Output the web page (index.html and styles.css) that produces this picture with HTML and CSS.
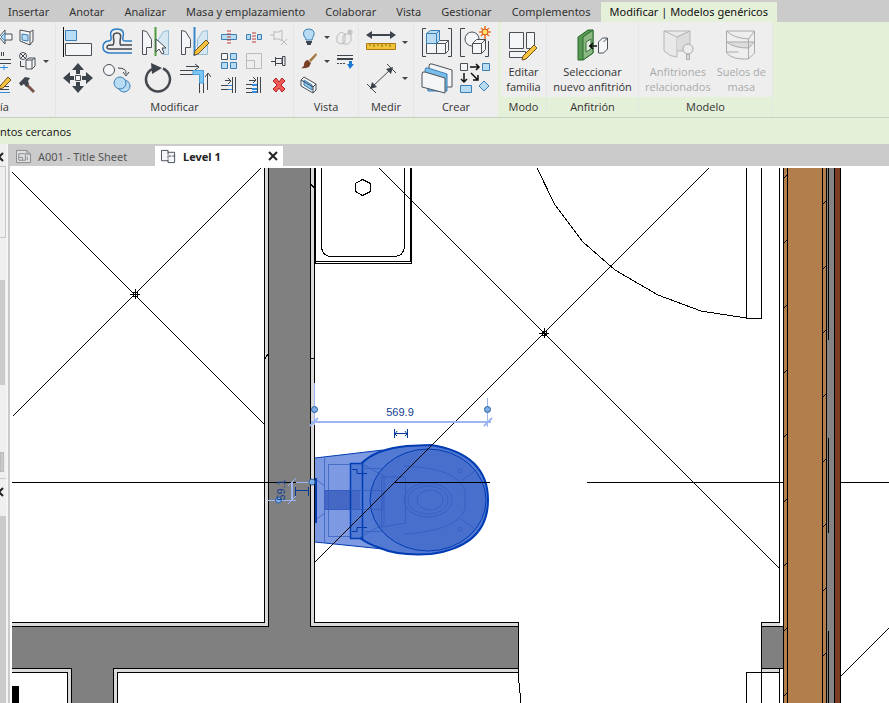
FILE: index.html
```html
<!DOCTYPE html>
<html lang="es">
<head>
<meta charset="utf-8">
<title>Level 1</title>
<link rel="stylesheet" href="styles.css">
</head>
<body>
<nav class="tabs">
  <a href="#">Insertar</a><a href="#">Anotar</a><a href="#">Analizar</a><a href="#">Masa y emplazamiento</a><a href="#">Colaborar</a><a href="#">Vista</a><a href="#">Gestionar</a><a href="#">Complementos</a><a href="#" class="active">Modificar | Modelos genéricos</a>
</nav>

<div class="ribbon">
  <section class="panel geometry">
    <div class="tools small-grid">
      <button aria-label="Muesca"><svg viewBox="0 0 18 18"><path d="M17 6h-7V2L4 9l6 7v-4h7z" class="o"/><path d="M6 9l4-4v8z" class="bl"/></svg></button>
      <button aria-label="Cortar"><svg viewBox="0 0 18 18"><path d="M2 2l10 2 3-2v11l-3 4L2 13zM12 4v13" class="o"/><path d="M4 6l6 1v6l-6-1z" class="bl"/></svg></button>
      <i></i>
      <button aria-label="Juntas"><svg viewBox="0 0 18 18"><path d="M0 7.500h16M0 11.500h16" class="k"/><path d="M6.500 0v4M8.500 0v4" class="k"/><path d="M5 15.500h8M9 13v5" class="b"/></svg></button>
      <button aria-label="Unir"><svg viewBox="0 0 18 18"><circle cx="5" cy="4" r="3.500" class="o"/><path d="M2 1l6 6M8 1L2 7M2.500 9v5.500h4" class="k"/><path d="M8 8l3-2h6v8l-3 3H8zM8 8h6v9M14 8l3-2" class="o"/></svg></button>
      <i class="arrow"></i>
      <button aria-label="Pintar"><svg viewBox="0 0 18 18"><path d="M0 10.500h14M0 13.500h14" class="k"/><path d="M0 16.500h15" class="b"/><path d="M5 10L13 1l3 3-8 8-4 1z" class="pen"/></svg></button>
      <button aria-label="Derribar"><svg viewBox="0 0 18 18"><path d="M8 8l8 8" stroke="#7a5346" stroke-width="3"/><path d="M1 7l6-6 5 1-2 3 1 3-3 3-2-3-3 2z" fill="#3f454d"/></svg></button>
      <i></i>
    </div>
    <h2>ía</h2>
  </section>

  <section class="panel modify">
    <div class="tools">
      <div class="big-grid four">
        <button aria-label="Alinear"><svg viewBox="0 0 32 32"><path d="M1.500 1v30" stroke="#111"/><path d="M3.500 4.500h11v10h-11z" class="bl"/><path d="M3.500 17.500h26v12h-26z" class="o"/></svg></button>
        <button aria-label="Desfase"><svg viewBox="0 0 32 32"><path d="M31 15h-7q-3 0-2-4 2-8-6-8-8 0-6 8 1 4-3 4-5 1-5 6t6 6h23" fill="none" stroke="#2f7fc8" stroke-width="1.500"/><path d="M31 19H19.500q-1-2 0-7 1-5-3.500-5t-3.500 5q1 5-.5 7-6-.500-6 2t3 2h22" fill="none" stroke="#444a52" stroke-width="1.500"/></svg></button>
        <button aria-label="Simetría eje"><svg viewBox="0 0 32 32"><path d="M2.500 4.500l4 1 5 8v8h-5v7h-4z" class="o"/><path d="M28.500 4.500l-5 1-5 8v8h4l1 7h5z" class="lt"/><path d="M15.500 1v29" stroke="#4e9d3e" stroke-width="2"/><path d="M16 13v13l3-3 3 5 2-1-2-5h4z" fill="#fff" stroke="#454950"/></svg></button>
        <button aria-label="Dibujar eje"><svg viewBox="0 0 32 32"><path d="M2.500 4.500l4 1 5 8v8h-5v7h-4z" class="o"/><path d="M28.500 4.500l-5 1-5 8v15h10z" class="lt"/><path d="M15.500 1v29" stroke="#3a88cb" stroke-width="2"/><path d="M16 25l11-11 3 3-11 11-4 1z" class="pen"/></svg></button>
        <button aria-label="Mover"><svg viewBox="0 0 32 32"><path d="M16 1l6 7h-4v4h-4V8h-4zM16 31l6-7h-4v-4h-4v4h-4zM1 16l7-6v4h4v4H8v4zM31 16l-7-6v4h-4v4h4v4z" fill="#3c434b"/><path d="M13.500 13.500h5v5h-5z" class="o"/></svg></button>
        <button aria-label="Copiar"><svg viewBox="0 0 32 32"><circle cx="8" cy="8" r="5.500" class="o"/><path d="M17 6q9 0 8 6M22 10l3 4 3-4" class="k"/><circle cx="23" cy="24" r="6" class="bl"/><circle cx="19" cy="21" r="6" class="bl"/></svg></button>
        <button aria-label="Rotar"><svg viewBox="0 0 32 32"><path d="M12 7a12 12 0 1 0 11-.500" fill="none" stroke="#45494f" stroke-width="2.500"/><path d="M11 1l11 5-10 6z" fill="#3c434b"/></svg></button>
        <button aria-label="Recortar"><svg viewBox="0 0 32 32"><path d="M1 8.500h13M1 12.500h13M20.500 21v10M24.500 21v10M7 4.500h12M16 2l4 3-4 3M28.500 28V12M26 15l3-4 3 4" class="k"/><path d="M14 8.500h10.500V21h-4v-8.500H14z" fill="#7cc4f2" stroke="#4a9edb"/></svg></button>
      </div>
      <div class="small-grid">
        <button aria-label="Dividir"><svg viewBox="0 0 18 18"><path d="M1.500 6.500h15v5h-15z" class="bl"/><path d="M8 2v14M10 2v14" class="r"/></svg></button>
        <button aria-label="Dividir con hueco"><svg viewBox="0 0 18 18"><path d="M1.500 6.500h4v5h-4zM12.500 6.500h4v5h-4z" class="bl"/><path d="M8 4v11M10 4v11" class="r"/></svg></button>
        <button aria-label="Desbloquear" disabled><svg viewBox="0 0 18 18"><path d="M0 7h4M4 3v9M4 4h5l3-2v11l-3-2H4M11 11l6 6M17 11l-6 6" class="g"/></svg></button>
        <button aria-label="Matriz"><svg viewBox="0 0 18 18"><path d="M1.500 1.500h6v6h-6z" class="o"/><path d="M10.500 1.500h6v6h-6zM1.500 10.500h6v6h-6zM10.500 10.500h6v6h-6z" class="bl"/></svg></button>
        <button aria-label="Escala" disabled><svg viewBox="0 0 18 18"><path d="M1.500 1.500h15v15h-15z" class="g"/><path d="M1.500 8.500h8v8h-8z" class="g"/></svg></button>
        <button aria-label="Bloquear"><svg viewBox="0 0 18 18"><path d="M1 9.500h5M5.500 5v9M6 6.500h6v5H6M15 4.500h-2.500v9H15z" class="k"/></svg></button>
        <button aria-label="Recortar uno"><svg viewBox="0 0 18 18"><path d="M5 4.500h6M8 2l3 3-3 3M12.500 1v16M15.500 1v16M1 9.500h7M1 13.500h7" class="k"/><path d="M8 9.500h4M8 13.500h4" class="b"/></svg></button>
        <button aria-label="Recortar varios"><svg viewBox="0 0 18 18"><path d="M4 4.500h7M8 1l3 3-3 3M12.500 1v16M15.500 1v16M1 8.500h7M1 12.500h7M1 16.500h7" class="k"/><path d="M7 9h5M7 13h5M7 16h5" class="b w2"/></svg></button>
        <button aria-label="Suprimir"><svg viewBox="0 0 18 18"><path d="M3 5l3-3 3 4 3-4 3 3-4 4 4 4-3 3-3-4-3 4-3-3 4-4z" fill="#ef5b54" stroke="#b51f25"/></svg></button>
      </div>
    </div>
    <h2>Modificar</h2>
  </section>

  <section class="panel view">
    <div class="tools small-grid">
      <button aria-label="Ocultar"><svg viewBox="0 0 18 18"><path d="M6 12q0-2-2-4-2-6 4-7 7 0 6 6-2 3-2 5z" class="bl"/><path d="M6 14h6M7 16h4" class="k w2"/></svg></button>
      <i class="arrow"></i>
      <button aria-label="Desplazar" disabled><svg viewBox="0 0 18 18"><path d="M1 8l4-4 4 2v8l-4 2-4-2zM7 8l3-2h5v7l-3 3H7zM14 1v6M11 4h6M12 2l4 4M16 2l-4 4" class="g"/></svg></button>
      <button aria-label="Modificar gráficos"><svg viewBox="0 0 18 18"><path d="M9 8l7-7 1 2-6 7z" fill="#a87845"/><path d="M8 8l3 3-2 4q-5 2-8 1 3-1 3-4 1-4 4-4z" fill="#7a3f24"/></svg></button>
      <i class="arrow"></i>
      <button aria-label="Grosor de línea"><svg viewBox="0 0 18 18"><path d="M1 3.500h16" class="k"/><path d="M1 7h16" class="k w2"/><path d="M1 11.500h9" class="k dash"/><path d="M11 12h2V9h3v3h2l-4 5z" fill="#1f78d0"/></svg></button>
      <button aria-label="Caja de selección"><svg viewBox="0 0 18 18"><path d="M1 4l3-3 12 7v6l-3 3L1 10z" class="o"/><path d="M4 4l8 5v5L4 9z" fill="#8fc7ee" stroke="#3b7eb4"/><path d="M1 4l12 7v6M13 11l3-3" class="k"/></svg></button>
    </div>
    <h2>Vista</h2>
  </section>

  <section class="panel measure">
    <div class="tools big-grid">
      <button aria-label="Medir"><svg viewBox="0 0 32 32"><path d="M4 9h24" class="k w2"/><path d="M1 9l6-4v8zM31 9l-6-4v8z" fill="#3c434b"/><path d="M1.500 17.500h29v6h-29z" fill="#f0c33a" stroke="#a97812"/><path d="M5 18v2M9 18v3M13 18v2M17 18v3M21 18v2M25 18v3" stroke="#8b6910"/></svg></button><i class="arrow"></i>
      <button aria-label="Cota alineada"><svg viewBox="0 0 32 32"><path d="M7 25L26 7M22 2l9 9M2 22l9 9" class="k"/><path d="M5 27l2-7 5 5zM28 5l-7 2 5 5z" fill="#3c434b"/></svg></button><i class="arrow"></i>
    </div>
    <h2>Medir</h2>
  </section>

  <section class="panel create">
    <div class="tools big-grid">
      <button aria-label="Crear conjunto"><svg viewBox="0 0 32 32"><path d="M5 2.500H1.500v28H5M27 2.500h3.500v28H27" class="k"/><path d="M5.500 17.500h10v10h-10zM15.500 17.500l3-3h9v10l-3 3h-9zM15.500 17.500h9v10M24.500 17.500l3-3" class="o"/><path d="M5.500 7.500l4-3h9v10l-3 3h-10zM5.500 7.500h10v10M15.500 7.500l3-3" class="bl"/></svg></button>
      <button aria-label="Crear grupo"><svg viewBox="0 0 32 32"><path d="M6 2.500H1.500v28H6M26 30.500h3.500V15" class="k"/><circle cx="13" cy="13" r="7" class="o"/><path d="M13.500 17.500l4-4h9v10l-4 4h-9zM13.500 17.500h9v10M22.500 17.500l4-4" class="o"/><path d="M26 0v13M20 6h12M22 2l8 8M30 2l-8 8" stroke="#e97825" stroke-width="1.500"/><circle cx="26" cy="6" r="3" fill="#ffe16a" stroke="#d84d18"/></svg></button>
      <button aria-label="Crear similar"><svg viewBox="0 0 32 32"><path d="M8 4q0-3 3-2l20 6v17H9z" class="o"/><path d="M4 8q0-3 3-2l19 6v17H7z" fill="#79bdeb" stroke="#3b7eb4"/><path d="M1 12q0-3 3-2l20 6v15L1 25z" class="o"/></svg></button>
      <button aria-label="Crear piezas"><svg viewBox="0 0 32 32"><path d="M1.500 1.500h7v7h-7z" class="o"/><path d="M23.500 1.500h7v7h-7zM1.500 23.500h11v7h-11zM25 19l5 5-5 5-5-5z" class="bl"/><path d="M11 5h9M17 2l3 3-3 3M5 11v9M2 17l3 3 3-3M12 11l7 7M19 13v5h-5" stroke="#111" stroke-width="1.500" fill="none"/></svg></button>
    </div>
    <h2>Crear</h2>
  </section>

  <section class="panel context mode">
    <div class="tools">
      <button class="labelled"><svg viewBox="0 0 32 32"><path d="M2.500 3.500h14v16h-14zM19.500 3.500h8v16h-8zM2.500 22.500h16v6h-16z" class="o"/><path d="M16 27l11-11 3 3-11 11-4 1z" class="pen"/></svg><span>Editar<br>familia</span></button>
    </div>
    <h2>Modo</h2>
  </section>
  <section class="panel context host">
    <div class="tools">
      <button class="labelled"><svg viewBox="0 0 32 32"><path d="M1 8L11 1h5v23L6 31H1z" fill="#589754" stroke="#286b2b"/><path d="M6 8l10-7v23L6 31z" fill="#8bb883" stroke="#286b2b"/><path d="M9 13l5-3v10l-5 3z" fill="#dfe9dc" stroke="#397039"/><path d="M12 17h8M16 14l-3 3 3 3" stroke="#111" stroke-width="1.500" fill="none"/><path d="M21.500 13l4-4h5v11l-4 4h-5zM26.500 13l4-4" class="o"/></svg><span>Seleccionar<br>nuevo anfitrión</span></button>
    </div>
    <h2>Anfitrión</h2>
  </section>
  <section class="panel context model">
    <div class="tools">
      <button class="labelled" disabled><svg viewBox="0 0 32 32"><path d="M2 2h26l-13 6zM2 2v20q6 6 13 6V8" fill="#e9e9e9" stroke="#b5b5b5"/><path d="M15 8l13-6v20H15" fill="#dcdcdc" stroke="#b5b5b5"/><circle cx="26" cy="20" r="5" fill="#ececec" stroke="#a9a9a9"/><path d="M24.500 25.500h3v5h-3z" fill="#ddd" stroke="#a9a9a9"/></svg><span>Anfitriones<br>relacionados</span></button>
      <button class="labelled" disabled><svg viewBox="0 0 32 32"><path d="M1.500 13h28l-6 6Q9 19 1.500 13z" fill="#ddd" stroke="#aaa"/><path d="M1.500 2h28v22l-6 6Q8 31 1.500 24zM1.500 2q7 7 22 8l6-8M23.500 10v20M1.500 23h12" fill="none" stroke="#aaa"/></svg><span>Suelos de<br>masa</span></button>
    </div>
    <h2>Modelo</h2>
  </section>
</div>

<div class="options">ntos cercanos</div>

<main class="workspace">
  <aside>
    <div class="side-title"><svg viewBox="0 0 6 10"><path d="M3 1L-1 5l4 4" /></svg></div>
    <div class="type-box"></div>
    <div class="scroll"><b></b></div>
    <div class="side-button"></div>
    <div class="side-title second"><svg viewBox="0 0 6 10"><path d="M3 1L-1 5l4 4" /></svg></div>
    <div class="browser"></div>
  </aside>
  <div class="documents">
    <div class="doc-tabs">
      <a href="#"><svg viewBox="0 0 18 16"><path d="M1.500 1.500h11l4 4v9h-15zM12.500 1.500v4h4" fill="#e0e0e0" stroke="#858a8d"/><path d="M4 5h7v7H4zM4 9h4v3M13 8v4" fill="none" stroke="#858a8d"/></svg>A001 - Title Sheet</a>
      <a href="#" class="current"><svg viewBox="0 0 18 16"><path d="M1.500 1.500h7v2h7v11h-7v-2h-7z" fill="#f3f5f8" stroke="#444b54"/><path d="M8.500 3v10M9 7.500h7" stroke="#444b54" stroke-dasharray="3 1"/></svg>Level 1<button aria-label="Cerrar"><svg viewBox="0 0 10 10"><path d="M1 1l8 8M9 1L1 9" stroke="#222" stroke-width="2"/></svg></button></a>
    </div>
    <div class="canvas">
      <svg viewBox="10 166 879 537" preserveAspectRatio="xMinYMin slice" role="img" aria-label="Planta Level 1">
        <g shape-rendering="crispEdges">
          <path d="M264 168h51v454h204v51H118v30H67v-30H12v-51h252z" fill="#dadada"/>
          <path d="M268 168h43v458h208v43H114v34H71v-34H12v-43h256z" fill="#808080"/>
          <path d="M264.500 168v454.500H12M268.500 168v458.500H12M310.500 168v458.500H518M314.500 168v454.500H518.500v50H117.500V703M518 668.500H113.500V703M12 668.500h59.500V703M12 672.500h55.500V703" class="ln"/>
          <path d="M12 686h7v17h-7z"/>
          <path d="M783 168h45v535h-45z" fill="#b27e4c"/>
          <path d="M827 168h8v535h-8z" fill="#858383"/>
          <path d="M835 168h6v535h-6z" fill="#7b3d22"/>
          <path d="M761 622h19v51h-19z" fill="#dadada"/><path d="M761 626h23v43h-23z" fill="#808080"/>
          <path d="M779.500 168v454.500h-18v50M783.500 168v535M787.500 168v535M822.500 168v535M826.500 168v535M834.500 168v535M840.500 168v535M828.500 168v172M828.500 438v95M828.500 631v72M761.500 626.500h22M761.500 668.500h22M779.500 668.500V703M746.500 703v-30.500h33M761.500 672.500V703M746.500 168v150.500h15V168" class="ln"/>
          <path d="M784 178l3-3M784 243l3-3M784 308l3-3M784 373l3-3M784 437l3-3M784 502l3-3M784 566l3-3M784 631l3-3M784 696l3-3M823 204l3-3M823 269l3-3M823 333l3-3M823 397l3-3M823 462l3-3M823 527l3-3M823 591l3-3M823 656l3-3M265 359l3-5M311 184l3 4M311 359l3-1" class="ln"/>
          <path d="M315.500 168v93.500h95V168M411.500 168v95.500h-96V168M321.500 168v79q1 9 9 9.500h65q8-1 9-9.500v-79M355.500 183.500l7-4 8 4v8l-8 4-7-4z" class="ln"/>
          <path d="M12 172l252 252M12.500 416.500l248-248M379 168l400 400M709 168L315 562M841 676l48-48M12 482.500h298M587 482.500h196M841 482.500h48M518 672l3 31M537 168l18 37 28 37 32 28 43 25 43 16 45 7" class="ln"/>
          <path d="M130 294h10M135 289v10M539 333h10M544 328v10M133 292h4v4h-4zM542 331h4v4h-4z" class="ln cross"/>
        </g>
        <g class="fixture">
          <path d="M315 458l68-8q23-6 48-5 57 9 57 55t-57 54q-25 2-48-5l-68-7z" fill="#7c99e2"/>
          <path d="M350 464h10q14-15 47-18l24-1q57 9 57 55t-57 54q-33 2-51-6-12-4-20-10h-10z" fill="#527ad3"/>
          <ellipse cx="428" cy="500" rx="58" ry="51" fill="#496fcd"/>
          <path d="M324 490h36v20h-36z" fill="#4568c4"/>
          <g fill="none" stroke="#003cb3"><path d="M315 458l68-8M315 542l68 7"/><path d="M361 464q14-15 46-18l24-1q57 9 57 55t-57 54q-33 2-51-6-12-4-20-10" stroke-width="2"/><path d="M350.500 463.500h12v75h-12z" stroke-width="1.500"/><ellipse cx="428" cy="500" rx="58" ry="51"/></g>
          <g fill="none" stroke="#315bbf" opacity=".7"><path d="M324.500 458v84M328.500 464v72M328 464.500h22M328 536.500h22M324 490.500h59v19h-59M315 479l10 7M315 520l10-7M360 463l24 13v48l-24 13M362 468.500h20M362 531.500h20M381.500 477h24v46l-24 4zM404 466q54 2 61 25v18q-8 22-61 25M461 481l18-13M461 519l18 13"/><ellipse cx="428" cy="500" rx="24" ry="17"/><ellipse cx="428" cy="500" rx="20" ry="14"/><ellipse cx="430" cy="500" rx="13" ry="10"/><circle cx="460" cy="471" r="2"/><circle cx="460" cy="529" r="2"/></g>
          <path d="M316 478v45" stroke="#053ba8" stroke-width="2"/>
          <path d="M352 469.500h5v4h10M352 531.500h5v-4h10" fill="none" stroke="#053ba8"/>
          <path d="M315 562L436 441M394 482.500h96" class="ln"/>
        </g>
        <g class="dimension" fill="none" stroke="#9eb5f3"><path d="M314.500 383v42M487.500 398v29M268 500.500h28M288 486l8-8M288 504l8-8M296 482.500h15"/><path d="M311 422h180M310 426l8-8M484 426l8-8M292 482v18" stroke-width="2"/></g>
        <g fill="#7eaee7" stroke="#265f9e"><circle cx="314.500" cy="409.500" r="3"/><circle cx="487.500" cy="409.500" r="3"/><circle cx="312" cy="482" r="3"/><circle cx="278.500" cy="500" r="3"/></g>
        <path d="M394.500 429v9M407.500 429v9M395 433.500h12M397 431l-2 3 2 2M405 431l2 3-2 2M295.500 487v9M308.500 487v9M296 490.500h12" fill="none" stroke="#083b98"/>
        <text x="400" y="416">569.9</text><text transform="translate(285 490) rotate(-90)">59.1</text>
      </svg>
    </div>
  </div>
</main>
</body>
</html>
```
FILE: styles.css
```css
* { box-sizing: border-box; }
body { margin: 0; height: 100vh; display: flex; flex-direction: column; overflow: hidden; background: #cbcbcb; color: #333; font: 12px/15px "Open Sans", "Noto Sans", sans-serif; }
a { color: inherit; text-decoration: none; }
button { display: block; padding: 0; border: 0; background: none; color: inherit; font: inherit; }
svg { display: block; }
h2 { margin: 0; height: 20px; font-size: 11px; line-height: 19px; font-weight: 400; text-align: center; }
.tabs { display: flex; height: 22px; padding-top: 2px; flex: none; font-family: "Noto Sans", sans-serif; font-size: 11px; white-space: nowrap; }
.tabs a { padding: 0 10px; line-height: 20px; }
.tabs a:first-child { padding-left: 8px; }
.tabs .active { padding: 0 9px; background: #e5f0d9; color: #111; }
.ribbon { display: flex; flex: none; height: 96px; background: #e5f0d9; border-bottom: 1px solid #c9cec4; }
.panel { display: flex; flex-direction: column; flex: none; background: #eee; border-right: 1px solid #e5e8e0; font-size: 11px; }
.tools { display: flex; height: 75px; padding-top: 4px; }
.panel button svg { width: 100%; height: 100%; }
.small-grid { display: grid; grid-template-columns: 18px 18px 18px; grid-auto-rows: 18px; gap: 6px 7px; align-content: start; padding-top: 2px; }
.big-grid { display: grid; grid-template-columns: 32px 32px; grid-auto-rows: 32px; gap: 4px 6px; align-content: start; }
.four { grid-template-columns: repeat(4, 32px); column-gap: 7px; }
.arrow { place-self: center; border: 3px solid transparent; border-top-color: #444; border-bottom: 0; }
.geometry { width: 56px; overflow: hidden; }
.geometry .tools { padding: 6px 0 0; grid-template-columns: 18px 18px 9px; column-gap: 5px; margin-left: -5px; }
.geometry h2 { text-align: left; }
.modify { width: 238px; }
.modify .tools { padding-left: 6px; gap: 9px; }
.view { width: 65px; }
.view .tools { padding: 6px 0 0 6px; grid-template-columns: 18px 10px 18px; column-gap: 4px; }
.measure { width: 55px; }
.measure .tools { padding-left: 6px; grid-template-columns: 32px 8px; column-gap: 4px; }
.create { width: 84px; border-right: 0; }
.create .tools { padding-left: 7px; }
.context .tools { justify-content: center; }
.context h2 { background: #e5f0d9; }
.labelled { text-align: center; white-space: nowrap; }
.panel .labelled svg { width: 32px; height: 32px; margin: 0 auto 3px; }
.mode { width: 46px; margin-left: 3px; }
.host { width: 92px; }
.model { width: 134px; }
.model .tools { gap: 6px; }
.labelled:disabled { color: #aaa; }
.o { fill: #f4f5f7; stroke: #4b5057; }
.bl { fill: #b7dcf4; stroke: #3b7eb4; }
.lt { fill: #d4e7f2; stroke: #95bdd6; }
.k { fill: none; stroke: #3f454c; }
.b { fill: none; stroke: #2f8cdf; }
.g { fill: none; stroke: #bbb; }
.r { fill: none; stroke: #bd3d3d; stroke-dasharray: 2 1; }
.w2 { stroke-width: 2; }
.dash { stroke-dasharray: 2 1; }
.pen { fill: #f6c340; stroke: #71501c; }
.options { flex: none; height: 26px; line-height: 28px; font-size: 11px; color: #111; white-space: nowrap; background: #e5f0d9; }
.workspace { display: flex; flex: 1; min-height: 0; }
aside { width: 8px; flex: none; display: flex; flex-direction: column; overflow: hidden; background: #efefef; border-right: 2px solid #f5f5f5; }
.side-title { height: 22px; padding-top: 8px; }
.side-title svg { width: 6px; height: 10px; fill: none; stroke: #222; stroke-width: 2; transform: scaleX(-1); transform: none; }
.type-box { height: 72px; border: 1px solid #c8c8c8; border-left: 0; }
.scroll { height: 214px; padding-top: 42px; }
.scroll b { display: block; width: 5px; height: 105px; background: #cbcbcb; }
.side-button { width: 4px; height: 20px; background: #cbcbcb; border: 1px solid #bbb; }
.second { margin-top: 6px; border-top: 1px solid #cbcbcb; }
.browser { flex: 1; margin-top: 16px; background: #cbcbcb; }
.documents { flex: 1; min-width: 0; display: flex; flex-direction: column; margin-left: 2px; }
.doc-tabs { display: flex; flex: none; height: 22px; padding-top: 2px; font-family: "Noto Sans", sans-serif; }
.doc-tabs a { display: flex; align-items: center; width: 145px; padding-left: 5px; gap: 6px; font-size: 11px; color: #555; white-space: nowrap; }
.doc-tabs a > svg { width: 17px; height: 15px; }
.doc-tabs .current { width: 128px; background: #fff; color: #222; font-weight: 700; }
.doc-tabs button { margin-left: auto; margin-right: 5px; width: 10px; }
.canvas { flex: 1; min-height: 0; background: #fff; }
.canvas svg { width: 100%; height: 100%; }
.ln { fill: none; stroke: #000; }
text { fill: #123e91; font: 11px "Liberation Sans", sans-serif; text-anchor: middle; }
```
